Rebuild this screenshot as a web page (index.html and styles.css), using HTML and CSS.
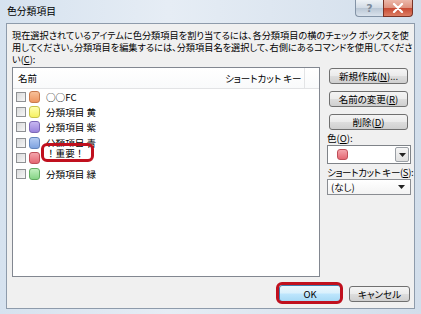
FILE: index.html
```html
<!DOCTYPE html>
<html lang="ja">
<head>
<meta charset="utf-8">
<title>色分類項目</title>
<link rel="stylesheet" href="styles.css">
</head>
<body>
<div class="window">
  <div class="titlebar">
    <span class="title">色分類項目</span>
    <div class="caption">
      <div class="cap-btn help">?</div>
      <div class="cap-btn close">
        <svg width="12" height="10" viewBox="0 0 12 10"><path d="M2 1 L10 9 M10 1 L2 9" stroke="#fff" stroke-width="2.2" stroke-linecap="round"/></svg>
      </div>
    </div>
  </div>
  <div class="client">
    <p class="desc">現在選択されているアイテムに色分類項目を割り当てるには、各分類項目の横のチェック ボックスを使<br>用してください。分類項目を編集するには、分類項目名を選択して、右側にあるコマンドを使用してくださ<br>い(<span class="ul">C</span>):</p>
    <div class="main">
      <div class="list">
        <div class="list-head">
          <span class="col-name">名前</span>
          <span class="col-key">ショートカット キー</span>
        </div>
        <div class="rows">
          <div class="row"><span class="chk"></span><span class="sw orange"></span><span class="label">○○FC</span></div>
          <div class="row"><span class="chk"></span><span class="sw yellow"></span><span class="label">分類項目 黄</span></div>
          <div class="row"><span class="chk"></span><span class="sw purple"></span><span class="label">分類項目 紫</span></div>
          <div class="row"><span class="chk"></span><span class="sw blue"></span><span class="label">分類項目 青</span></div>
          <div class="row"><span class="chk"></span><span class="sw red"></span><span class="label editing">！重要！</span></div>
          <div class="row"><span class="chk"></span><span class="sw green"></span><span class="label">分類項目 緑</span></div>
        </div>
      </div>
      <div class="side">
        <button class="btn side-btn">新規作成(<span class="ul">N</span>)...</button>
        <button class="btn side-btn">名前の変更(<span class="ul">R</span>)</button>
        <button class="btn side-btn">削除(<span class="ul">D</span>)</button>
        <span class="field-label">色(<span class="ul">O</span>):</span>
        <div class="combo color-combo">
          <span class="sw red combo-sw"></span>
          <span class="drop-btn"><svg width="7" height="4" viewBox="0 0 7 4"><path d="M0 0 H7 L3.5 4 Z" fill="#222"/></svg></span>
        </div>
        <span class="field-label key-label">ショートカット キー(<span class="ul">S</span>):</span>
        <div class="combo key-combo">
          <span class="combo-text">(なし)</span>
          <svg width="7" height="4" viewBox="0 0 7 4"><path d="M0 0 H7 L3.5 4 Z" fill="#222"/></svg>
        </div>
      </div>
    </div>
    <div class="footer">
      <button class="btn ok">OK</button>
      <button class="btn cancel">キャンセル</button>
    </div>
  </div>
</div>
</body>
</html>
```
FILE: styles.css
```css
* { box-sizing: border-box; }

html, body {
  margin: 0;
  padding: 0;
  width: 421px;
  height: 314px;
  overflow: hidden;
  font-family: "Noto Sans CJK JP", "Noto Sans", sans-serif;
  font-feature-settings: "palt";
  color: #000;
}

.ul {
  text-decoration: underline;
  text-underline-offset: 1px;
}

.window {
  width: 421px;
  height: 314px;
  background: linear-gradient(to right, #d6e2ef 0%, #e6edf5 40%, #d2deeb 100%);
  display: flex;
  flex-direction: column;
}

.titlebar {
  height: 23px;
  display: flex;
  align-items: center;
  padding-left: 7px;
}

.title {
  font-size: 9.8px;
  line-height: 12px;
  margin-top: -1px;
  font-feature-settings: normal;
}

.caption {
  margin-left: auto;
  margin-right: 8px;
  align-self: flex-start;
  display: flex;
}

.cap-btn {
  height: 17px;
  display: flex;
  align-items: center;
  justify-content: center;
}

.help {
  width: 28px;
  border: 1px solid #8393a6;
  border-top: none;
  border-right: none;
  border-radius: 0 0 0 4px;
  background: linear-gradient(#eef2f6, #d2dbe5 48%, #bac7d5 52%, #d9e2ec);
  color: #7d8b9b;
  font-family: "DejaVu Sans", sans-serif;
  font-weight: bold;
  font-size: 11px;
}

.close {
  width: 30px;
  border: 1px solid #7a3326;
  border-top: none;
  border-radius: 0 0 4px 0;
  background: linear-gradient(#ecb8aa, #de927f 48%, #c84a33 52%, #dc7e64);
}

.client {
  margin-left: 6px;
  width: 409px;
  height: 286px;
  border: 1px solid #8e9bab;
  background: #f0f0f0;
  display: flex;
  flex-direction: column;
}

.desc {
  margin: 0;
  padding: 5px 0 0 5px;
  font-size: 9.2px;
  line-height: 12px;
  white-space: nowrap;
}

.main {
  display: flex;
  gap: 7px;
  margin-top: 2px;
  padding-left: 5px;
}

.list {
  width: 308px;
  height: 210px;
  border: 1px solid #828790;
  background: #fff;
}

.list-head {
  height: 21px;
  display: grid;
  grid-template-columns: 212px 80px;
  align-items: stretch;
  border-bottom: 1px solid #e2e3e5;
  background: linear-gradient(#ffffff, #f9fafb);
  font-size: 9.5px;
}

.col-name {
  padding-left: 5px;
  display: flex;
  align-items: center;
}

.col-key {
  display: flex;
  align-items: center;
  border-right: 1px solid #e3e4e6;
  white-space: nowrap;
}

.rows {
  display: flex;
  flex-direction: column;
}

.row {
  height: 15.4px;
  display: flex;
  align-items: center;
  padding-left: 3px;
  font-size: 9.6px;
}

.chk {
  width: 10px;
  height: 10px;
  border: 1px solid #8f9194;
  background: linear-gradient(135deg, #d9dadb, #f7f7f7);
  margin-right: 3px;
}

.sw {
  width: 11px;
  height: 12px;
  border-radius: 3px;
  margin-right: 6px;
  border: 1px solid;
}

.orange { background: linear-gradient(#f7c098, #ee9560); border-color: #c87a4c; }
.yellow { background: linear-gradient(#ffffb0, #f6f162); border-color: #c9c44a; }
.purple { background: linear-gradient(#c6b6f0, #9a84dc); border-color: #7d68b8; }
.blue   { background: linear-gradient(#b4cbf2, #7fa3e0); border-color: #6386bd; }
.red    { background: linear-gradient(#f4a4ab, #e46873); border-color: #bf4e58; }
.green  { background: linear-gradient(#c2f0c0, #86d486); border-color: #62ac62; }

.label {
  line-height: 12px;
  white-space: nowrap;
}

.editing {
  position: relative;
  top: -5px;
  background: #fff;
  padding-right: 2px;
  font-feature-settings: normal;
}

.editing::after {
  content: "";
  position: absolute;
  left: -5px;
  right: -8px;
  top: -4px;
  bottom: -3px;
  border: 3px solid #c0101e;
  border-radius: 6px;
}

.side {
  width: 84px;
  display: flex;
  flex-direction: column;
  padding-top: 1px;
}

.btn {
  font-family: "Noto Sans CJK JP", "Noto Sans", sans-serif;
  font-feature-settings: "palt";
  font-size: 9.5px;
  line-height: 12px;
  padding: 0;
  color: #000;
  border: 1px solid #707070;
  border-radius: 3px;
  background: linear-gradient(#f4f4f4, #ebebeb 48%, #dddddd 52%, #cfcfcf);
  display: flex;
  align-items: center;
  justify-content: center;
  white-space: nowrap;
}

.side-btn {
  width: 79px;
  height: 16px;
  margin-left: 2px;
  margin-bottom: 7px;
}

.side-btn:nth-of-type(3) { margin-bottom: 2px; }

.field-label {
  font-size: 9.5px;
  line-height: 12px;
  white-space: nowrap;
  margin-bottom: 1px;
}

.key-label {
  letter-spacing: -0.35px;
}

.combo {
  width: 84px;
  background: #fff;
  border: 1px solid #7f8388;
  display: flex;
  align-items: center;
  margin-bottom: 2px;
}

.color-combo {
  height: 19px;
  padding-left: 9px;
  padding-right: 1px;
}

.combo-sw {
  width: 11px;
  height: 11px;
  margin-right: 0;
}

.drop-btn {
  margin-left: auto;
  width: 14px;
  height: 15px;
  border: 1px solid #9a9fa5;
  border-radius: 2px;
  background: linear-gradient(#f6f6f6, #e0e0e0);
  display: flex;
  align-items: center;
  justify-content: center;
}

.key-combo {
  height: 16px;
  padding: 0 5px 0 3px;
  border-color: #8a8d92;
  background: linear-gradient(#ffffff, #f3f3f3);
  font-size: 9.5px;
}

.combo-text { line-height: 12px; }

.key-combo svg { margin-left: auto; }

.footer {
  display: flex;
  justify-content: flex-end;
  gap: 8px;
  margin-top: 8px;
  padding-right: 4px;
}

.ok {
  position: relative;
  width: 62px;
  height: 17px;
  border-color: #3c7fb1;
  background: linear-gradient(#eaf6fd, #d9f0fc 48%, #bee6fd 52%, #a7d9f5);
}

.ok::after {
  content: "";
  position: absolute;
  left: -4px;
  right: -3px;
  top: -4px;
  bottom: -3px;
  border: 3px solid #c0101e;
  border-radius: 6px;
}

.cancel {
  width: 61px;
  height: 16px;
  margin-top: 1px;
}
```
